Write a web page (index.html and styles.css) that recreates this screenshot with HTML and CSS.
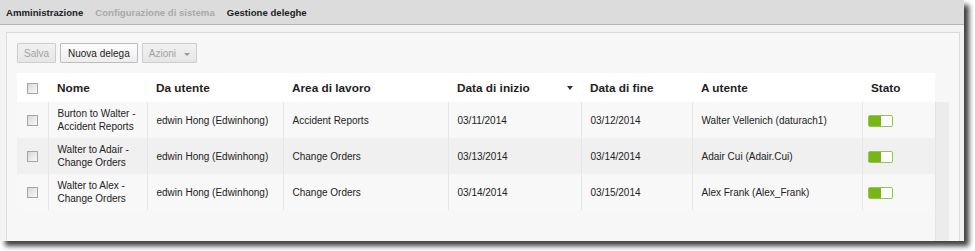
FILE: index.html
```html
<!DOCTYPE html>
<html lang="it">
<head>
    <meta charset="UTF-8">
    <title>Gestione deleghe</title>
    <link rel="stylesheet" href="styles.css">
</head>
<body>

<div class="window">
    <div class="topnav">
        <span class="crumb">Amministrazione</span>
        <span class="crumb muted">Configurazione di sistema</span>
        <span class="crumb">Gestione deleghe</span>
    </div>

    <div class="content">
        <div class="panel">
            <div class="toolbar">
                <button class="btn disabled">Salva</button>
                <button class="btn">Nuova delega</button>
                <button class="btn disabled">Azioni <span class="caret"></span></button>
            </div>

            <div class="grid-wrap">
                <table class="grid">
                    <colgroup>
                        <col style="width:31px">
                        <col style="width:99px">
                        <col style="width:136px">
                        <col style="width:165px">
                        <col style="width:133px">
                        <col style="width:111px">
                        <col style="width:170px">
                        <col style="width:73px">
                    </colgroup>
                    <thead>
                        <tr>
                            <th class="check"><span class="checkbox"></span></th>
                            <th>Nome</th>
                            <th>Da utente</th>
                            <th>Area di lavoro</th>
                            <th>Data di inizio <span class="sort"></span></th>
                            <th>Data di fine</th>
                            <th>A utente</th>
                            <th>Stato</th>
                        </tr>
                    </thead>
                    <tbody>
                        <tr>
                            <td class="check"><span class="checkbox"></span></td>
                            <td>Burton to Walter -<br>Accident Reports</td>
                            <td>edwin Hong (Edwinhong)</td>
                            <td>Accident Reports</td>
                            <td>03/11/2014</td>
                            <td>03/12/2014</td>
                            <td>Walter Vellenich (daturach1)</td>
                            <td class="state"><span class="toggle"><span class="on"></span></span></td>
                        </tr>
                        <tr class="alt">
                            <td class="check"><span class="checkbox"></span></td>
                            <td>Walter to Adair -<br>Change Orders</td>
                            <td>edwin Hong (Edwinhong)</td>
                            <td>Change Orders</td>
                            <td>03/13/2014</td>
                            <td>03/14/2014</td>
                            <td>Adair Cui (Adair.Cui)</td>
                            <td class="state"><span class="toggle"><span class="on"></span></span></td>
                        </tr>
                        <tr>
                            <td class="check"><span class="checkbox"></span></td>
                            <td>Walter to Alex -<br>Change Orders</td>
                            <td>edwin Hong (Edwinhong)</td>
                            <td>Change Orders</td>
                            <td>03/14/2014</td>
                            <td>03/15/2014</td>
                            <td>Alex Frank (Alex_Frank)</td>
                            <td class="state"><span class="toggle"><span class="on"></span></span></td>
                        </tr>
                    </tbody>
                </table>
                <div class="scroll-strip"></div>
            </div>
        </div>
    </div>
</div>

</body>
</html>
```

FILE: styles.css
```css
html, body { height: 251px; }
body { margin: 0; background: #fff; font-family: "Liberation Sans", Arial, sans-serif; color: #222; overflow: hidden; }
.window { width: 964px; height: 241px; display: flex; flex-direction: column; background: #f3f3f3; box-shadow: 5px 5px 5px rgba(0,0,0,0.75); }

.topnav { height: 24px; flex: none; display: flex; align-items: center; gap: 12px; padding-left: 6px; background: #dcdcdc; border-bottom: 1px solid #b4b4b4; }
.crumb { font-size: 9.6px; font-weight: bold; color: #1c1c1c; }
.crumb.muted { color: #a9a9a9; }

.content { flex: 1; display: flex; padding: 7px 5px 0 6px; }
.panel { flex: 1; display: flex; flex-direction: column; background: #f7f7f7; border: 1px solid #dcdcdc; border-bottom: none; padding: 10px 10px 0 10px; }

.toolbar { display: flex; gap: 4px; }
.btn { height: 20px; padding: 0 7px; font-family: inherit; font-size: 10px; color: #222; background: linear-gradient(#fdfdfd, #ededed); border: 1px solid #bcbcbc; border-radius: 1px; }
.btn.disabled { padding: 0 6px; color: #a2a2a2; background: linear-gradient(#f1f1f1, #e6e6e6); border-color: #cdcdcd; }
.caret { display: inline-block; margin-left: 5px; vertical-align: 1px; border-left: 3px solid transparent; border-right: 3px solid transparent; border-top: 3px solid #999; }

.grid-wrap { flex: 1; display: flex; margin-top: 10px; }
.grid { width: 918px; table-layout: fixed; border-collapse: collapse; align-self: flex-start; }
.grid th { height: 29px; background: #fff; text-align: left; font-size: 11.8px; font-weight: bold; color: #1e1e1e; padding: 0 0 0 9px; }
.grid td { height: 36px; padding: 0 0 0 9px; font-size: 10px; color: #222; border-left: 1px solid #e6e6e6; background: #f8f8f8; line-height: 13px; }
.grid tr.alt td { background: #f0f0f0; }
.grid td.check, .grid th.check { padding: 0; text-align: center; border-left: none; }
.grid td.state { padding-left: 5px; }

.checkbox { display: inline-block; width: 9px; height: 9px; vertical-align: middle; border: 1px solid #a5a5a5; background: linear-gradient(135deg, #d8d8d8, #fafafa); }

.sort { float: right; margin: 5px 8px 0 0; border-left: 3px solid transparent; border-right: 3px solid transparent; border-top: 4px solid #333; }

.toggle { display: inline-block; width: 23px; height: 10px; vertical-align: middle; border: 1px solid #94c454; border-radius: 2px; background: #fff; }
.toggle .on { display: block; width: 12px; height: 10px; background: #78b517; }

.scroll-strip { width: 13px; margin-top: 29px; background: #ececec; border-left: 1px solid #e4e4e4; }
```
